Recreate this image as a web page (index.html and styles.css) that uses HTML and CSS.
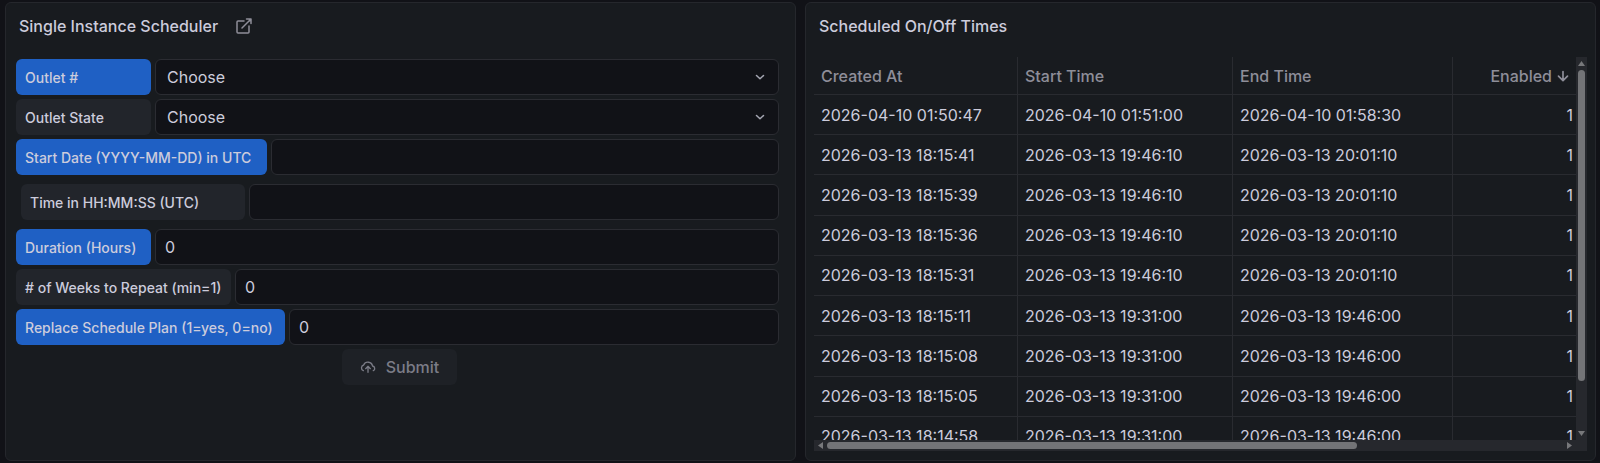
FILE: index.html
```html
<!DOCTYPE html>
<html lang="en">
<head>
<meta charset="utf-8">
<title>Outlet Scheduler</title>
<link rel="stylesheet" href="styles.css">
</head>
<body>
<main class="dashboard">
  <section class="panel">
    <header class="panel-header">
      <h2 class="panel-title">Single Instance Scheduler</h2>
      <a class="panel-link" href="#" aria-label="Open link">
        <svg viewBox="0 0 16 16" width="16" height="16"><path d="M8 3H2a1 1 0 0 0-1 1V14a1 1 0 0 0 1 1h10a1 1 0 0 0 1-1V8M10.500 1H15v4.500M15 1 6 10M13.500 1.500v1.500"/></svg>
      </a>
    </header>
    <form class="form">
      <div class="field">
        <label class="label label-primary label-short" for="outlet">Outlet #</label>
        <div class="select-wrap">
          <select class="control" id="outlet"><option>Choose</option></select>
          <svg class="chevron" viewBox="0 0 10 10" width="10" height="10"><path d="M1.500 3.500 5 6.800 8.500 3.500"/></svg>
        </div>
      </div>
      <div class="field">
        <label class="label label-short" for="state">Outlet State</label>
        <div class="select-wrap">
          <select class="control" id="state"><option>Choose</option></select>
          <svg class="chevron" viewBox="0 0 10 10" width="10" height="10"><path d="M1.500 3.500 5 6.800 8.500 3.500"/></svg>
        </div>
      </div>
      <div class="field">
        <label class="label label-primary label-date" for="date">Start Date (YYYY-MM-DD) in UTC</label>
        <input class="control" id="date" type="text">
      </div>
      <div class="field field-inset">
        <label class="label label-time" for="time">Time in HH:MM:SS (UTC)</label>
        <input class="control" id="time" type="text">
      </div>
      <div class="field">
        <label class="label label-primary label-short" for="duration">Duration (Hours)</label>
        <input class="control" id="duration" type="text" value="0">
      </div>
      <div class="field">
        <label class="label label-weeks" for="weeks"># of Weeks to Repeat (min=1)</label>
        <input class="control" id="weeks" type="text" value="0">
      </div>
      <div class="field">
        <label class="label label-primary label-replace" for="replace">Replace Schedule Plan (1=yes, 0=no)</label>
        <input class="control" id="replace" type="text" value="0">
      </div>
      <button class="submit" type="button">
        <svg viewBox="0 0 24 24" width="16" height="16" fill="none" stroke="currentColor" stroke-width="2" stroke-linecap="round" stroke-linejoin="round"><path d="M5 17.500A4.500 4.500 0 0 1 5.500 9a7 7 0 0 1 13.300 1.500A3.700 3.700 0 0 1 20 17.500M12 20v-8.500M8.500 14.500 12 11l3.500 3.500"/></svg>
        Submit
      </button>
    </form>
  </section>

  <section class="panel">
    <header class="panel-header">
      <h2 class="panel-title">Scheduled On/Off Times</h2>
    </header>
    <div class="scroller">
      <div class="viewport">
        <table class="table">
          <colgroup><col class="col-created"><col class="col-start"><col class="col-end"><col></colgroup>
          <thead>
            <tr><th>Created At</th><th>Start Time</th><th>End Time</th><th class="sorted"><span class="sort">Enabled <svg viewBox="0 0 12 12" width="12" height="12"><path d="M6 1.500v9M1.500 6.200 6 10.600l4.500-4.400"/></svg></span></th></tr>
          </thead>
          <tbody>
            <tr><td>2026-04-10 01:50:47</td><td>2026-04-10 01:51:00</td><td>2026-04-10 01:58:30</td><td>1</td></tr>
            <tr><td>2026-03-13 18:15:41</td><td>2026-03-13 19:46:10</td><td>2026-03-13 20:01:10</td><td>1</td></tr>
            <tr><td>2026-03-13 18:15:39</td><td>2026-03-13 19:46:10</td><td>2026-03-13 20:01:10</td><td>1</td></tr>
            <tr><td>2026-03-13 18:15:36</td><td>2026-03-13 19:46:10</td><td>2026-03-13 20:01:10</td><td>1</td></tr>
            <tr><td>2026-03-13 18:15:31</td><td>2026-03-13 19:46:10</td><td>2026-03-13 20:01:10</td><td>1</td></tr>
            <tr><td>2026-03-13 18:15:11</td><td>2026-03-13 19:31:00</td><td>2026-03-13 19:46:00</td><td>1</td></tr>
            <tr><td>2026-03-13 18:15:08</td><td>2026-03-13 19:31:00</td><td>2026-03-13 19:46:00</td><td>1</td></tr>
            <tr><td>2026-03-13 18:15:05</td><td>2026-03-13 19:31:00</td><td>2026-03-13 19:46:00</td><td>1</td></tr>
            <tr><td>2026-03-13 18:14:58</td><td>2026-03-13 19:31:00</td><td>2026-03-13 19:46:00</td><td>1</td></tr>
          </tbody>
        </table>
      </div>
      <div class="bar bar-v">
        <svg viewBox="0 0 7 5" width="7" height="5"><path d="M3.500 0 7 5H0Z"/></svg>
        <div class="track"><div class="thumb"></div></div>
        <svg viewBox="0 0 7 5" width="7" height="5"><path d="M0 0h7L3.500 5Z"/></svg>
      </div>
      <div class="bar bar-h">
        <svg viewBox="0 0 5 7" width="5" height="7"><path d="M5 0v7L0 3.500Z"/></svg>
        <div class="track"><div class="thumb"></div></div>
        <svg viewBox="0 0 5 7" width="5" height="7"><path d="M0 0v7l5-3.500Z"/></svg>
      </div>
      <div class="corner"></div>
    </div>
  </section>
</main>
</body>
</html>
```

FILE: styles.css
```css
* {
  box-sizing: border-box;
}

body {
  margin: 0;
  background: #111217;
  color: #ccccdc;
  font-family: Inter, "Liberation Sans", sans-serif;
  font-size: 16px;
}

.dashboard {
  display: grid;
  grid-template-columns: 1fr 1fr;
  gap: 9px;
  height: 100vh;
  padding: 2px 4px 2px 5px;
}

.panel {
  display: flex;
  flex-direction: column;
  min-width: 0;
  min-height: 0;
  background: #181b1f;
  border: 1px solid #25272c;
  border-radius: 6px;
}

.panel-header {
  display: flex;
  align-items: center;
  gap: 18px;
  height: 46px;
  padding: 0 13px;
}

.panel-title {
  margin: 0;
  font-size: 16px;
  font-weight: 500;
}

.panel-link {
  display: flex;
  color: #8e8e99;
}

.panel-link svg {
  fill: none;
  stroke: currentColor;
  stroke-width: 1.500;
  stroke-linecap: round;
  stroke-linejoin: round;
}

.form {
  display: flex;
  flex-direction: column;
  gap: 4px;
  padding: 10px 16px 10px 10px;
}

.field {
  display: flex;
  gap: 4px;
  height: 36px;
}

.field-inset {
  margin: 5px 0 5px 5px;
}

.label {
  display: flex;
  flex: none;
  align-items: center;
  padding: 0 9px;
  border-radius: 6px;
  background: #22252b;
  font-size: 14px;
  font-weight: 500;
  white-space: nowrap;
}

.label-primary { background: #1f60c4; }
.label-short { width: 135px; }
.label-date { width: 251px; }
.label-time { width: 224px; }
.label-weeks { width: 215px; }
.label-replace { width: 269px; }

.control {
  flex: 1;
  width: 100%;
  min-width: 0;
  height: 36px;
  margin: 0;
  padding: 0 9px;
  border: 1px solid #2b2c32;
  border-radius: 6px;
  background: #111217;
  color: #ccccdc;
  font: inherit;
  outline: none;
  appearance: none;
}

.select-wrap {
  position: relative;
  flex: 1;
}

.select-wrap .control {
  padding: 0 11px;
}

.chevron {
  position: absolute;
  top: 13px;
  right: 14px;
  fill: none;
  stroke: #a5a6b2;
  stroke-width: 1.500;
  stroke-linecap: round;
  stroke-linejoin: round;
  pointer-events: none;
}

.submit {
  display: flex;
  align-items: center;
  align-self: center;
  gap: 10px;
  height: 36px;
  margin-left: 4px;
  padding: 0 18px;
  border: 0;
  border-radius: 6px;
  background: #1e2126;
  color: #7b7c87;
  font: inherit;
  font-weight: 500;
}

.scroller {
  display: grid;
  flex: 1;
  grid-template-columns: 1fr 11px;
  grid-template-rows: 1fr 11px;
  min-height: 0;
  padding: 8px 8px 9px;
}

.viewport {
  min-width: 0;
  overflow: hidden;
}

.table {
  width: 100%;
  height: 400px;
  border-collapse: separate;
  border-spacing: 0;
  table-layout: fixed;
}

.col-created { width: 204px; }
.col-start { width: 215px; }
.col-end { width: 220px; }

.table th,
.table td {
  height: 40px;
  padding: 0 7px;
  border-right: 1px solid #292b30;
  border-bottom: 1px solid #292b30;
  text-align: left;
  white-space: nowrap;
}

.table th {
  height: 38px;
  color: #8e8e99;
  font-weight: 500;
}

.table th:last-child,
.table td:last-child {
  padding: 0 3px;
  border-right: 0;
  text-align: right;
}

.table th:last-child {
  padding-right: 7px;
}

.sort {
  display: inline-flex;
  align-items: center;
  gap: 5px;
}

.sort svg {
  fill: none;
  stroke: currentColor;
  stroke-width: 1.700;
  stroke-linecap: round;
  stroke-linejoin: round;
}

.bar {
  display: flex;
  align-items: center;
  gap: 4px;
  padding: 4px 2px;
  background: #26282d;
  fill: #77787b;
}

.bar-v { flex-direction: column; }
.bar-h { padding: 2px 4px; }

.track {
  flex: 1;
  align-self: stretch;
}

.thumb {
  border-radius: 4px;
  background: #737477;
}

.bar-v .thumb { height: 87%; }
.bar-h .thumb { width: 72%; height: 100%; }

.corner {
  background: #26282d;
}
```
